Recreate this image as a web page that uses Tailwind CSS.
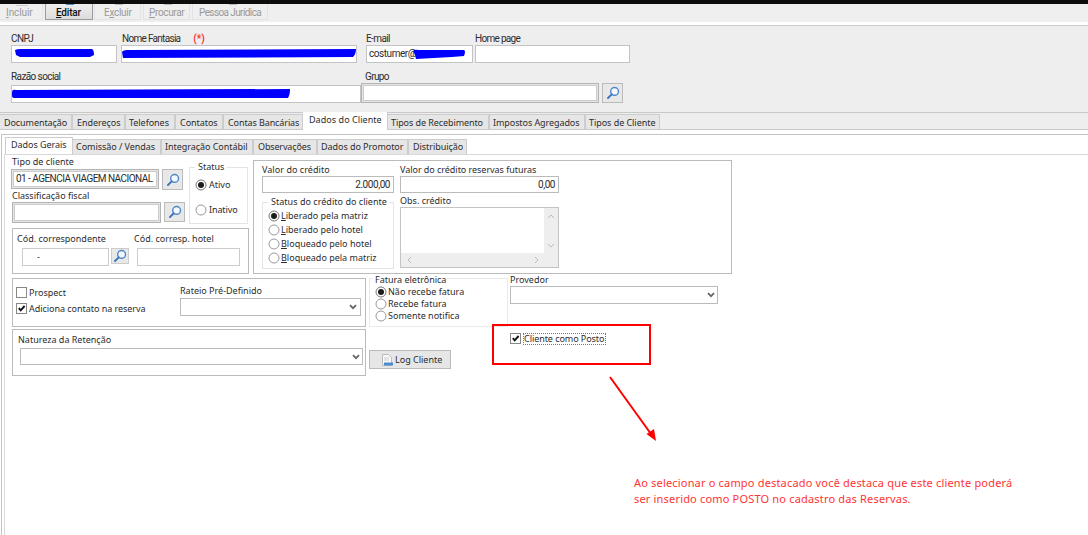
<!DOCTYPE html>
<html lang="pt-BR">
  <head>
    <meta charset="UTF-8" />
    <meta name="viewport" content="width=device-width, initial-scale=1.0" />
    <title>Cadastro de Cliente</title>
    <script src="https://cdn.jsdelivr.net/npm/@tailwindcss/browser@4"></script>
  </head>
  <body class="relative w-[1088px] h-[535px] overflow-hidden bg-white text-[#2c2c2c] text-[9px] leading-[12px] font-['Noto_Sans','Open_Sans',sans-serif] whitespace-nowrap">
    <svg class="hidden">
      <symbol id="search" viewBox="0 0 14 14">
        <circle cx="8.6" cy="5.4" r="3.9" fill="#f4f9ff" stroke="#4d86c6" stroke-width="1.4" />
        <path d="M5.7 8.4 2 12" stroke="#3a76bd" stroke-width="1.9" stroke-linecap="round" />
      </symbol>
      <symbol id="radio-on" viewBox="0 0 12 12">
        <circle cx="6" cy="6" r="5" fill="#fff" stroke="#777" />
        <circle cx="6" cy="6" r="3" fill="#1c1c1c" />
      </symbol>
      <symbol id="radio-off" viewBox="0 0 12 12">
        <circle cx="6" cy="6" r="5" fill="#fff" stroke="#999" />
      </symbol>
      <symbol id="box" viewBox="0 0 11 11">
        <rect x=".5" y=".5" width="10" height="10" fill="#fff" stroke="#888" />
      </symbol>
      <symbol id="check" viewBox="0 0 11 11">
        <rect x=".5" y=".5" width="10" height="10" fill="#fff" stroke="#888" />
        <path d="M2.8 5.2 4.7 7.4 8.6 3" fill="none" stroke="#111" stroke-width="1.9" />
      </symbol>
      <symbol id="chevron" viewBox="0 0 8 6">
        <path d="M1 1.2 4 4.2 7 1.2" fill="none" stroke="#666" stroke-width="1.8" />
      </symbol>
    </svg>

    <!-- Toolbar -->
    <div class="h-1 bg-[#0c0c0c]"></div>
    <div class="flex h-[18px] bg-[#efefef] font-[Roboto,sans-serif] text-[10px] text-[#999] overflow-hidden">
      <div class="relative w-[43px] h-4 pl-[6px] pt-[3px] border-r border-b border-[#e4e4e4] tracking-[-0.1px]"><i class="absolute left-4 top-0 w-3 h-[2px] border-b border-[#ccc]"></i><u>I</u>ncluir</div>
      <div class="relative ml-[2px] w-[48px] h-4 pl-[10px] pt-[3px] border border-t-0 border-[#9b9b9b] bg-gradient-to-b from-[#eee] to-[#ddd] text-[#111] font-medium tracking-[-0.2px]"><i class="absolute left-5 top-0 w-2 h-px bg-[#4d86c6]"></i><u>E</u>ditar</div>
      <div class="relative ml-[1px] w-[47px] h-4 pl-[9px] pt-[3px] border border-t-0 border-[#e2e2e2] tracking-[-0.3px]"><i class="absolute left-5 top-0 w-2 h-px bg-[#bbb]"></i>E<u>x</u>cluir</div>
      <div class="relative ml-[2px] w-[47px] h-4 pl-[5px] pt-[3px] border border-t-0 border-[#e2e2e2] tracking-[-0.35px]"><i class="absolute left-5 top-0 w-2 h-px bg-[#bbb]"></i><u>P</u>rocurar</div>
      <div class="relative ml-[2px] w-[76px] h-4 pl-[6px] pt-[3px] border border-t-0 border-[#e2e2e2] tracking-[-0.6px]"><i class="absolute left-9 top-0 w-2 h-px bg-[#bbb]"></i>Pessoa Jurídica</div>
    </div>
    <div class="h-[4px] bg-white border-b border-[#ccc]"></div>

    <!-- Client header -->
    <div class="h-[86px] bg-[#eee] pl-[11px] pt-[7px] font-[Roboto,sans-serif] text-[10px] tracking-[-0.6px]">
      <div class="flex">
        <div class="w-[110px]">
          <div>CNPJ</div>
          <div class="w-[106px] h-[18px] bg-white border border-[#c4c4c4]">
            <svg class="w-[104px] h-4"><path d="M3 4Q5 3 8 3L80 3Q82 4 82 9L78 11H8L4 9Z" fill="#0000ff" /></svg>
          </div>
        </div>
        <div class="w-[245px]">
          <div class="pl-px tracking-[-0.7px]">Nome Fantasia <b class="ml-[11px] text-[#f33] tracking-normal">(*)</b></div>
          <div class="w-[236px] h-[18px] bg-white border border-[#c4c4c4]">
            <svg class="w-[234px] h-4"><path d="M0 6Q1 4 5 4L234 3Q234 8 231 11L1 12Z" fill="#0000ff" /></svg>
          </div>
        </div>
        <div class="w-[109px]">
          <div>E-mail</div>
          <div class="relative w-[107px] h-[18px] pl-[2px] pt-[2px] bg-white border border-[#c4c4c4] tracking-[-0.45px]">costumer@
            <svg class="absolute left-0 top-0 w-[105px] h-4"><path d="M46 5Q47 3 52 4L97 4Q99 5 97 10L85 11 49 13 48 9Z" fill="#0000ff" /></svg>
          </div>
        </div>
        <div>
          <div class="tracking-[-0.7px]">Home page</div>
          <div class="w-[155px] h-[18px] bg-white border border-[#c4c4c4]"></div>
        </div>
      </div>
      <div class="flex mt-[8px]">
        <div class="w-[350px]">
          <div class="tracking-[-0.6px]">Razão social</div>
          <div class="mt-[2px] w-[350px] h-[18px] bg-white border border-[#c4c4c4]">
            <svg class="w-[348px] h-4"><path d="M0 6Q0 3 4 4L278 3Q278 9 276 12H3Q0 12 0 10Z" fill="#0000ff" /></svg>
          </div>
        </div>
        <div class="w-[241px]">
          <div class="pl-[4px] tracking-[-0.65px]">Grupo</div>
          <div class="w-[238px] h-[20px] p-px bg-[#e4e4e4] border border-[#b4b4b4]"><div class="h-full bg-white border border-[#ccc]"></div></div>
        </div>
        <div class="mt-[12px] w-[21px] h-[20px] flex items-center justify-center border border-[#bbb] bg-[#e8e8e8]"><svg class="w-[14px] h-[14px]"><use href="#search" /></svg></div>
      </div>
    </div>

    <!-- Main tabs -->
    <div class="flex items-end h-[18px] bg-[#eee] border-y border-[#c8c8c8] tracking-[-0.05px]">
      <div class="w-[72px] h-[15px] pt-[2px] pl-1 bg-[#e6e6e6] border border-l-0 border-b-0 border-[#ccc] tracking-[-0.08px]">Documentação</div>
      <div class="w-[53px] h-[15px] pt-[2px] pl-1 bg-[#e6e6e6] border border-b-0 border-[#ccc]">Endereços</div>
      <div class="w-[50px] h-[15px] pt-[2px] pl-[3px] bg-[#e6e6e6] border border-b-0 border-[#ccc]">Telefones</div>
      <div class="w-[48px] h-[15px] pt-[2px] pl-1 bg-[#e6e6e6] border border-b-0 border-[#ccc]">Contatos</div>
      <div class="w-[80px] h-[15px] pt-[2px] pl-1 bg-[#e6e6e6] border border-b-0 border-[#ccc] tracking-[-0.1px]">Contas Bancárias</div>
      <div class="w-[85px] h-[18px] -mb-px pt-[2px] pl-[6px] bg-white border-r border-[#ccc] tracking-[0.05px]">Dados do Cliente</div>
      <div class="w-[101px] h-[15px] pt-[2px] pl-[3px] bg-[#e6e6e6] border border-l-0 border-b-0 border-[#ccc] tracking-[-0.08px]">Tipos de Recebimento</div>
      <div class="w-[96px] h-[15px] pt-[2px] pl-[3px] bg-[#e6e6e6] border border-b-0 border-[#ccc] tracking-[-0.08px]">Impostos Agregados</div>
      <div class="w-[75px] h-[15px] pt-[2px] pl-[3px] bg-[#e6e6e6] border border-b-0 border-[#ccc]">Tipos de Cliente</div>
    </div>

    <div class="mt-[4px] ml-px h-[401px] border-l border-t border-[#c4c4c4]">
      <!-- Inner tabs -->
      <div class="flex items-end h-[19px] ml-[3px] tracking-[-0.05px]">
        <div class="w-[68px] h-[17px] pt-[1px] pl-[5px] bg-white border border-b-0 border-[#ccc]">Dados Gerais</div>
        <div class="w-[88px] h-[15px] pt-px pl-[3px] bg-[#e6e6e6] border border-l-0 border-b-0 border-[#ccc]">Comissão / Vendas</div>
        <div class="w-[92px] h-[15px] pt-px pl-[3px] bg-[#e6e6e6] border border-b-0 border-[#ccc]">Integração Contábil</div>
        <div class="w-[64px] h-[15px] pt-px pl-1 bg-[#e6e6e6] border border-b-0 border-[#ccc] tracking-[-0.15px]">Observações</div>
        <div class="w-[91px] h-[15px] pt-px pl-[3px] bg-[#e6e6e6] border border-b-0 border-[#ccc]">Dados do Promotor</div>
        <div class="w-[59px] h-[15px] pt-px pl-[4px] bg-[#e6e6e6] border border-b-0 border-[#ccc]">Distribuição</div>
      </div>

      <div class="flex ml-[2px] h-[381px] border-l border-t border-[#d8d8d8]">
        <div class="flex flex-col w-[747px] -mt-px pl-[6px]">
          <div class="flex h-[120px]">
            <!-- Type, classification and status -->
            <div class="w-[242px] pt-[2px]">
              <div class="flex h-[68px]">
                <div class="w-[178px]">
                  <div class="pl-px tracking-[0.03px]">Tipo de cliente</div>
                  <div class="flex mt-[1px]">
                    <div class="w-[148px] h-[20px] p-px border border-[#b4b4b4] bg-[#e4e4e4]"><div class="h-full pl-[2px] pt-px bg-white border border-[#ccc] font-[Roboto,sans-serif] text-[10px] tracking-[-0.54px]">01 - AGENCIA VIAGEM NACIONAL</div></div>
                    <div class="ml-[3px] w-[21px] h-[21px] flex items-center justify-center border border-[#bbb] bg-[#e8e8e8]"><svg class="w-[14px] h-[14px]"><use href="#search" /></svg></div>
                  </div>
                  <div class="pl-px">Classificação fiscal</div>
                  <div class="flex ml-px">
                    <div class="w-[149px] h-[21px] p-px border border-[#b4b4b4] bg-[#e4e4e4]"><div class="h-full bg-white border border-[#ccc]"></div></div>
                    <div class="ml-[3px] w-[21px] h-[20px] flex items-center justify-center border border-[#bbb] bg-[#e8e8e8]"><svg class="w-[14px] h-[14px]"><use href="#search" /></svg></div>
                  </div>
                </div>
                <div class="mt-[11px] w-[59px] h-[57px] border border-[#e4e4e4]">
                  <div class="w-[32px] h-[12px] -mt-[7px] ml-[5px] pl-[3px] bg-white">Status</div>
                  <div class="flex items-center gap-[2px] mt-[6px] ml-[5px]"><svg class="w-[12px] h-[12px]"><use href="#radio-on" /></svg>Ativo</div>
                  <div class="flex items-center gap-[2px] mt-[13px] ml-[5px] tracking-[-0.1px]"><svg class="w-[12px] h-[12px]"><use href="#radio-off" /></svg>Inativo</div>
                </div>
              </div>
              <div class="flex ml-px mt-[4px] w-[237px] h-[46px] pl-[4px] pt-[4px] border border-[#bbb]">
                <div class="w-[117px]">
                  <div>Cód. correspondente</div>
                  <div class="flex mt-[3px] ml-[5px] gap-[2px]">
                    <div class="w-[87px] h-[18px] pl-[14px] pt-[2px] border border-[#ccc]">-</div>
                    <div class="w-[18px] h-[16px] flex items-center justify-center border border-[#ccc] bg-[#e8e8e8]"><svg class="w-[14px] h-[14px]"><use href="#search" /></svg></div>
                  </div>
                </div>
                <div>
                  <div>Cód. corresp. hotel</div>
                  <div class="mt-[3px] ml-[3px] w-[103px] h-[18px] border border-[#ccc]"></div>
                </div>
              </div>
            </div>

            <!-- Credit -->
            <div class="mt-[6px] w-[479px] h-[114px] pl-[8px] pt-[3px] border border-[#bbb] flex gap-[6px]">
              <div class="w-[132px]">
                <div class="tracking-[0.05px]">Valor do crédito</div>
                <div class="h-[17px] pr-[3px] pt-[2px] border border-[#bbb] text-right font-[Roboto,sans-serif] text-[10px] tracking-[-0.45px]">2.000,00</div>
                <div class="mt-[9px] h-[67px] border border-[#e4e4e4]">
                  <div class="w-[121px] h-[12px] -mt-[7px] ml-[5px] pl-[3px] bg-white tracking-[0.03px]">Status do crédito do cliente</div>
                  <div class="flex flex-col gap-[2px] mt-[2px] ml-[5px]">
                    <div class="flex gap-[1px]"><svg class="w-[12px] h-[12px]"><use href="#radio-on" /></svg><span><u>L</u>iberado pela matriz</span></div>
                    <div class="flex gap-[1px]"><svg class="w-[12px] h-[12px]"><use href="#radio-off" /></svg><span><u>L</u>iberado pelo hotel</span></div>
                    <div class="flex gap-[1px]"><svg class="w-[12px] h-[12px]"><use href="#radio-off" /></svg><span><u>B</u>loqueado pelo hotel</span></div>
                    <div class="flex gap-[1px]"><svg class="w-[12px] h-[12px]"><use href="#radio-off" /></svg><span><u>B</u>loqueado pela matriz</span></div>
                  </div>
                </div>
              </div>
              <div class="w-[159px]">
                <div class="tracking-[-0.04px]">Valor do crédito reservas futuras</div>
                <div class="h-[17px] pr-[3px] pt-[2px] border border-[#bbb] text-right font-[Roboto,sans-serif] text-[10px] tracking-[-0.45px]">0,00</div>
                <div class="mt-[2px]">Obs. crédito</div>
                <div class="h-[61px] border border-[#c4c4c4] bg-[#eee]">
                  <div class="w-[143px] h-[45px] bg-white"></div>
                  <svg class="w-[157px] h-[59px] -mt-[45px]" fill="none" stroke="#bbb">
                    <path d="M147 10l3-3 3 3M147 36l3 3 3-3M10 49l-3 3 3 3M134 49l3 3-3 3" />
                  </svg>
                </div>
              </div>
            </div>
          </div>

          <!-- Apportionment, invoice and provider -->
          <div class="flex ml-px mt-[3px] h-[51px]">
            <div class="w-[354px] h-[49px] mt-px pl-[3px] pt-[6px] flex border border-[#bbb]">
              <div class="w-[164px] pt-[2px]">
                <div class="flex gap-[2px]"><svg class="w-[11px] h-[11px]"><use href="#box" /></svg>Prospect</div>
                <div class="flex gap-[2px] mt-[4px] tracking-[-0.04px]"><svg class="w-[11px] h-[11px]"><use href="#check" /></svg>Adiciona contato na reserva</div>
              </div>
              <div>
                <div>Rateio Pré-Definido</div>
                <div class="mt-[1px] w-[181px] h-[18px] flex justify-end items-center pr-[3px] border border-[#bbb]"><svg class="w-[8px] h-[6px]"><use href="#chevron" /></svg></div>
              </div>
            </div>
            <div class="ml-[3px] mt-[1px] w-[139px] h-[49px] border border-[#eaeaea]">
              <div class="w-[74px] h-[10px] leading-[12px] -mt-[5px] ml-[3px] pl-[2px] bg-white">Fatura eletrônica</div>
              <div class="flex flex-col ml-[5px] mt-[2px]">
                <div class="flex gap-[1px]"><svg class="w-[12px] h-[12px]"><use href="#radio-on" /></svg>Não recebe fatura</div>
                <div class="flex gap-[1px]"><svg class="w-[12px] h-[12px]"><use href="#radio-off" /></svg>Recebe fatura</div>
                <div class="flex gap-[1px]"><svg class="w-[12px] h-[12px]"><use href="#radio-off" /></svg>Somente notifica</div>
              </div>
            </div>
            <div class="ml-[2px] -mt-[3px]">
              <div>Provedor</div>
              <div class="w-[208px] h-[18px] flex justify-end items-center pr-[2px] border border-[#bbb]"><svg class="w-[8px] h-[6px]"><use href="#chevron" /></svg></div>
            </div>
          </div>

          <!-- Withholding, log button and post checkbox -->
          <div class="flex ml-px h-[48px]">
            <div class="mt-px w-[354px] h-[47px] pt-[4px] pl-[5px] border border-[#bbb]">
              <div>Natureza da Retenção</div>
              <div class="mt-[2px] ml-[2px] w-[343px] h-[17px] flex justify-end items-center pr-[2px] border border-[#bbb]"><svg class="w-[8px] h-[6px]"><use href="#chevron" /></svg></div>
            </div>
            <div class="mt-[22px] ml-[3px] w-[82px] h-[19px] pl-[11px] flex items-center gap-[2px] border border-[#bbb] bg-[#e6e6e6]">
              <svg class="w-[12px] h-[14px]">
                <path d="M1.5 1.5h6l3 3v8h-9z" fill="#f8f8f8" stroke="#bbb" />
                <path d="M3 5h5M3 7h5" stroke="#ccc" />
                <path d="M3 9.5h9v3H3z" fill="#4d8bd0" />
              </svg>Log Cliente
            </div>
            <div class="flex gap-[2px] ml-[59px] mt-[5px] h-[12px]">
              <svg class="w-[11px] h-[11px]"><use href="#check" /></svg>
              <div class="w-[83px] h-[12px] leading-[10px] border border-dotted border-[#777] tracking-[-0.06px]">Cliente como Posto</div>
            </div>
          </div>
        </div>
      </div>
    </div>

    <!-- Annotations over the form -->
    <div class="absolute left-[492px] top-[324px] w-[159px] h-[41px] border-2 border-[#f00]"></div>
    <svg class="absolute left-[600px] top-[370px] w-[70px] h-[80px]" fill="#f00">
      <path d="M10 7 51 64" stroke="#f00" stroke-width="2" />
      <path d="M56 71 46.500 64 54 59z" />
    </svg>
    <div class="absolute left-[634px] top-[475px] text-[11px] leading-[15.500px] tracking-[0.18px] text-[#f33]">Ao selecionar o campo destacado você destaca que este cliente poderá<br />ser inserido como POSTO no cadastro das Reservas.</div>
  </body>
</html>
